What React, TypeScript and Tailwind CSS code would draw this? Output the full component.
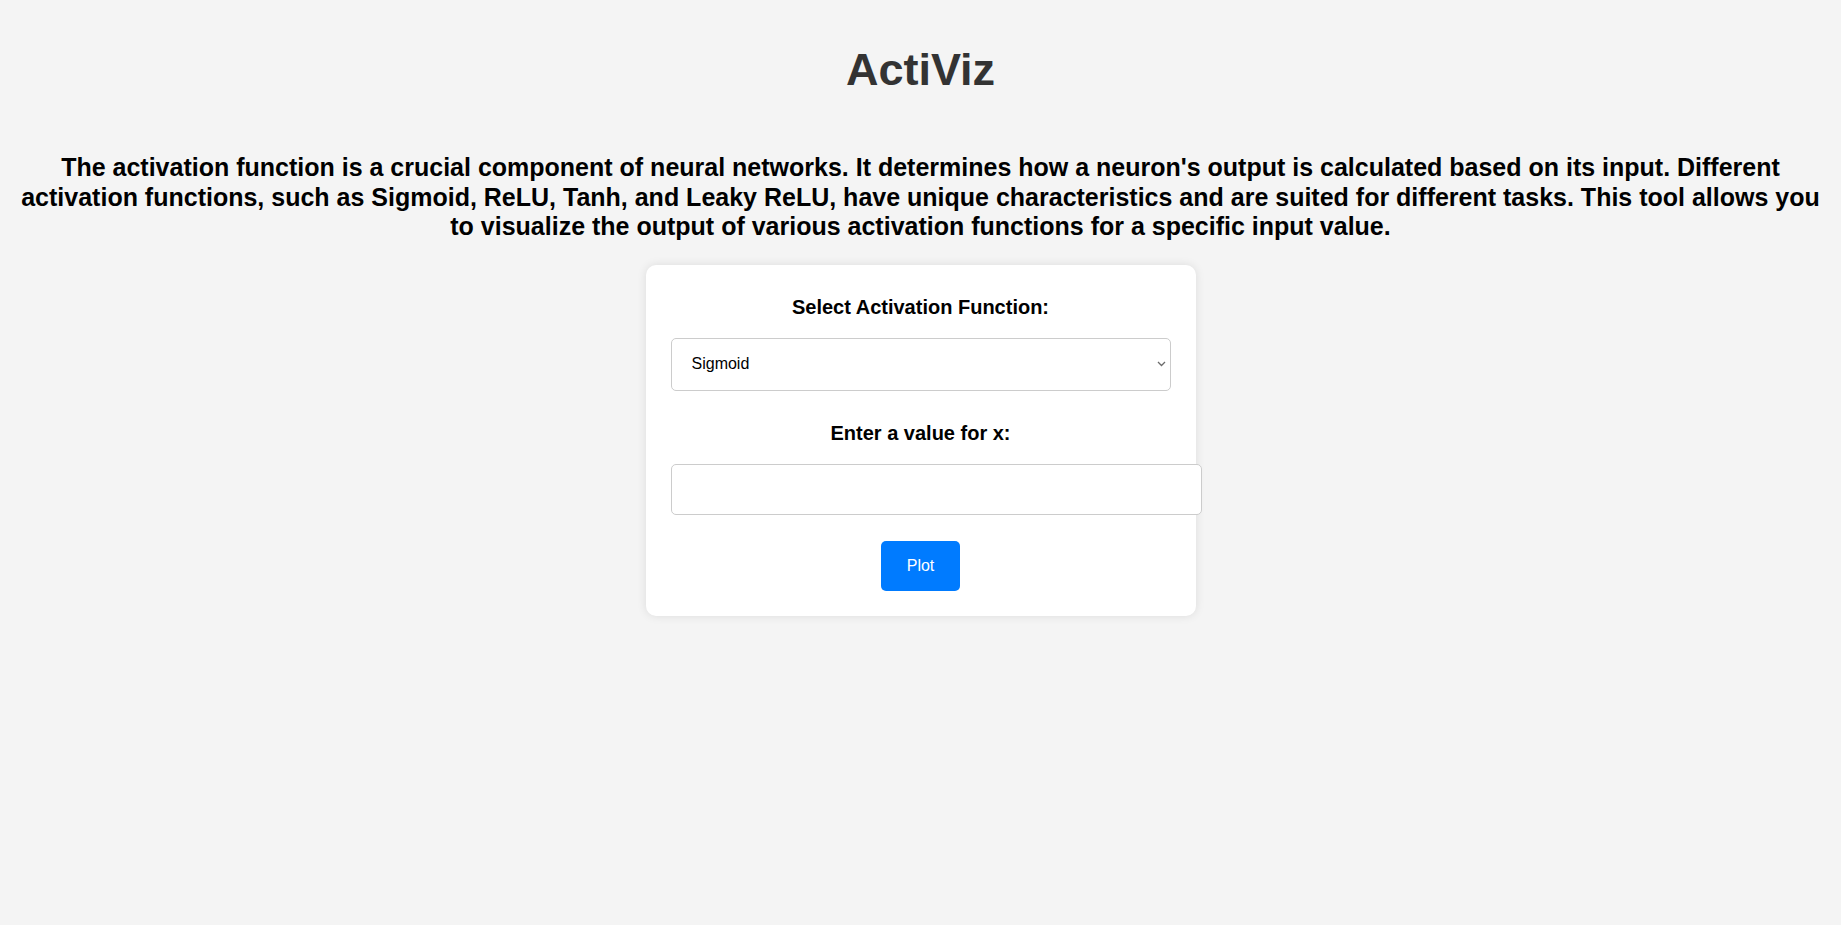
import React, { useState } from 'react';

const FUNCTIONS = ['Sigmoid', 'ReLU', 'Tanh', 'Leaky ReLU'];

const App: React.FC = () => {
  const [fn, setFn] = useState('Sigmoid');
  const [x, setX] = useState('');

  return (
    <div className="min-h-screen bg-[#f4f4f4] px-[20px] pt-[45px] pb-10 font-['Liberation_Sans',Arial,sans-serif]">
      <h1 className="text-center text-[45px] leading-[50px] font-bold text-[#333]">ActiViz</h1>

      <p className="mt-[58px] text-center text-[25px] leading-[29.5px] font-bold text-black">
        The activation function is a crucial component of neural networks. It determines how a neuron's output is
        calculated based on its input. Different activation functions, such as Sigmoid, ReLU, Tanh, and Leaky ReLU,
        have unique characteristics and are suited for different tasks. This tool allows you to visualize the output
        of various activation functions for a specific input value.
      </p>

      <div className="mx-auto mt-[23px] w-[550px] rounded-[10px] bg-white px-[25px] pt-[31px] pb-[25px] shadow-[0_0_10px_rgba(0,0,0,0.1)]">
        {/* activation picker */}
        <label className="block text-center text-[20px] leading-[23px] font-bold text-black">
          Select Activation Function:
        </label>
        <div className="relative mt-[19px]">
          <select
            value={fn}
            onChange={(e) => setFn(e.target.value)}
            className="block h-[53px] w-[500px] appearance-none rounded-[5px] border border-[#ccc] bg-white pl-[20px] pr-10 text-[16px] text-black outline-none"
          >
            {FUNCTIONS.map((f) => (
              <option key={f} value={f}>
                {f}
              </option>
            ))}
          </select>
          <svg
            className="pointer-events-none absolute right-[5px] top-[23px]"
            width="9"
            height="6"
            viewBox="0 0 9 6"
            fill="none"
          >
            <path d="M1 1l3.5 3.5L8 1" stroke="#6b6b6b" strokeWidth="1.3" />
          </svg>
        </div>

        {/* x value */}
        <label className="mt-[31px] block text-center text-[20px] leading-[23px] font-bold text-black">
          Enter a value for x:
        </label>
        <input
          type="number"
          value={x}
          onChange={(e) => setX(e.target.value)}
          className="mt-[19px] block h-[51px] w-[531px] rounded-[5px] border border-[#ccc] bg-white px-[15px] text-[16px] outline-none"
        />

        <div className="mt-[26px] flex justify-center">
          <button className="h-[50px] w-[79px] rounded-[5px] bg-[#007bff] text-[16px] text-white">Plot</button>
        </div>
      </div>
    </div>
  );
};

export default App;
